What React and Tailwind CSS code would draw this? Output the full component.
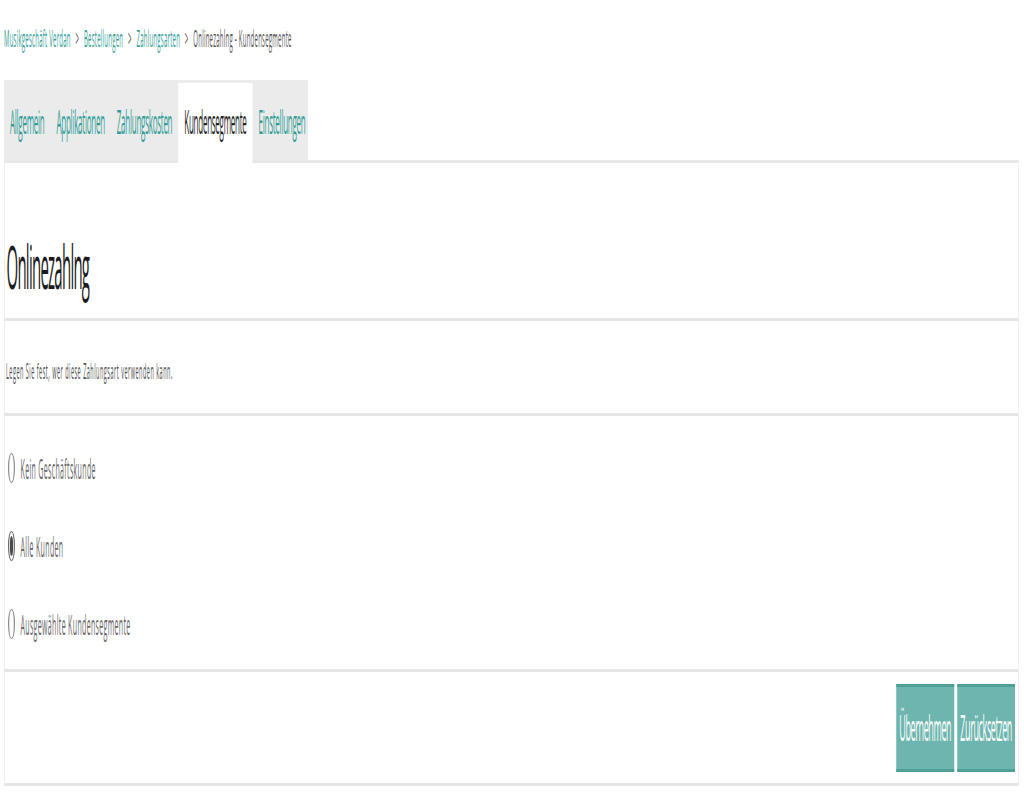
const LINK = "text-[#2f9d95]";

function Radio({ checked }) {
  return (
    <span
      className={
        "flex h-[30px] w-[28px] shrink-0 items-center justify-center rounded-full border-x-[5px] border-y-[1.5px] bg-white " +
        (checked ? "border-[#6b6b6b]" : "border-[#8f8f8f]")
      }
    >
      {checked && <span className="h-[20px] w-[12px] rounded-full bg-[#4a4a4a]" />}
    </span>
  );
}

function Sep() {
  return <span className="mx-[19px] text-[#555]">&gt;</span>;
}

const tabs = ["Allgemein", "Applikationen", "Zahlungskosten", "Kundensegmente", "Einstellungen"];

export default function App() {
  return (
    <div className="h-[800px] w-[1024px] overflow-hidden bg-white">
      <div className="w-[4096px] origin-top-left scale-x-[0.25] pl-4 font-['Open_Sans',sans-serif]">
        {/* Breadcrumb */}
        <nav className="flex items-center whitespace-nowrap pt-[23px] text-[24px] leading-[30px] tracking-[1px]">
          <span className={LINK}>Musikgeschäft Verdan</span>
          <Sep />
          <span className={LINK}>Bestellungen</span>
          <Sep />
          <span className={LINK}>Zahlungsarten</span>
          <Sep />
          <span className="text-[#555]">Onlinezahlng - Kundensegmente</span>
        </nav>

        {/* Tabs */}
        <div className="mt-[27px] flex h-[80px] w-[1216px] items-start bg-[#ebebeb] pt-[3px] text-[32px] leading-[40px] tracking-[-1px] whitespace-nowrap">
          {tabs.map((t) =>
            t === "Kundensegmente" ? (
              <div
                key={t}
                className="relative z-10 -mb-[3px] flex h-[80px] items-center bg-white px-6 pb-[3px] text-[#222]"
              >
                {t}
              </div>
            ) : (
              <div key={t} className={"flex h-[77px] items-center px-6 " + LINK}>
                {t}
              </div>
            )
          )}
        </div>

        {/* Panel */}
        <div className="w-[4060px]">
          <section className="border-x-[4px] border-t-[3px] border-b-[3px] border-x-[#f0f0f0] border-t-[#e8e8e8] border-b-[#e6e6e6] pt-[73px] pb-[22px] pl-[6px]">
            <h1 className="text-[60px] leading-[60px] font-normal tracking-[-3px] text-[#1c1c1c]">Onlinezahlng</h1>
          </section>

          <section className="border-x-[4px] border-b-[3px] border-x-[#f0f0f0] border-b-[#e6e6e6] pt-[35px] pb-[29px] pl-[4px]">
            <p className="text-[22px] leading-[28px] tracking-[2px] text-[#4d4d4d]">
              Legen Sie fest, wer diese Zahlungsart verwenden kann.
            </p>
          </section>

          <section className="flex flex-col border-x-[4px] border-b-[3px] border-x-[#f0f0f0] border-b-[#e6e6e6] pt-[13px] pb-[6px] pl-[12px] text-[28px] leading-[32px] tracking-[1.4px] text-[#666]">
            {[
              ["Kein Geschäftskunde", false],
              ["Alle Kunden", true],
              ["Ausgewählte Kundensegmente", false],
            ].map(([label, checked]) => (
              <label key={label} className="flex h-[78px] items-center gap-[22px] whitespace-nowrap">
                <Radio checked={checked} />
                <span>{label}</span>
              </label>
            ))}
          </section>

          <section className="flex justify-end gap-[12px] border-x-[4px] border-b-[3px] border-x-[#f0f0f0] border-b-[#e6e6e6] pt-[12px] pr-[12px] pb-[11px]">
            {["Übernehmen", "Zurücksetzen"].map((b) => (
              <button
                key={b}
                className="flex h-[88px] items-center border-y-[3px] border-y-[#4f9f97] bg-[#6db5ae] px-3 text-[36px] leading-[44px] tracking-[-1.5px] whitespace-nowrap text-white"
              >
                {b}
              </button>
            ))}
          </section>
        </div>
      </div>
    </div>
  );
}
